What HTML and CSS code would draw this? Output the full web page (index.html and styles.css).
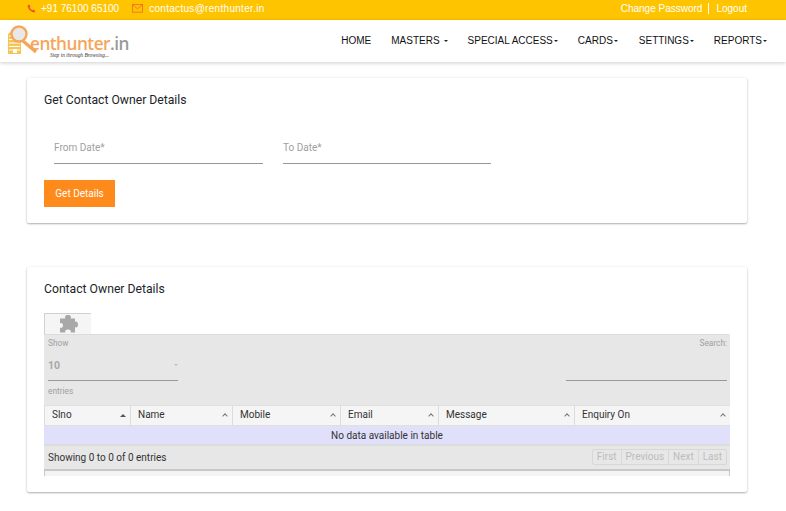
FILE: index.html
```html
<!DOCTYPE html>
<html lang="en">
<head>
    <meta charset="UTF-8">
    <meta name="viewport" content="width=device-width, initial-scale=1.0">
    <title>Contact Owner Details</title>
    <link rel="stylesheet" href="styles.css">
</head>
<body>

<div class="topbar">
    <div class="top-left">
        <svg class="top-icon" viewBox="0 0 12 12"><path d="M2.6 .6 L4.6 3.2 L3.6 4.6 C4.2 6 5.6 7.6 7.2 8.3 L8.6 7.3 L11.2 9.3 L9.9 11.2 C5.6 11.2 1 6.4 .8 2 Z" fill="#f4511e"/></svg>
        <span class="top-phone">+91 76100 65100</span>
        <svg class="top-icon mail" viewBox="0 0 12 10"><rect x=".5" y=".5" width="11" height="8.6" fill="none" stroke="#f4701e"/><path d="M.8 1 L6 5.4 L11.2 1" fill="none" stroke="#f4701e"/></svg>
        <span class="top-mail">contactus@renthunter.in</span>
    </div>
    <div class="top-right">
        <a class="top-link first">Change Password</a>
        <a class="top-link">Logout</a>
    </div>
</div>

<div class="navbar">
    <div class="logo">
        <svg class="logo-mark" viewBox="0 0 32 30">
            <path d="M0 29 V9 L7 3 L13 6 V29 Z" fill="#f6c455"/>
            <path d="M1 11 H12 M1 14.500 H12 M1 18 H12 M1 21.500 H12 M1 25 H12" stroke="#fff" stroke-width="1.200"/>
            <path d="M5 28 V24 H9 V28 Z" fill="#fff"/>
            <circle cx="11" cy="9" r="7.500" fill="#e8e8e8" stroke="#f5a65b" stroke-width="2.400"/>
            <path d="M15 16 L28 27" stroke="#f5a65b" stroke-width="3.200" fill="none"/>
        </svg>
        <div class="logo-text">
            <div class="logo-name">enthunter<span class="logo-in">.in</span></div>
            <div class="logo-tag">Step in through Browsing...</div>
        </div>
    </div>
    <ul class="menu">
        <li class="home">HOME</li>
        <li class="masters">MASTERS<span class="caret wide"></span></li>
        <li class="special">SPECIAL ACCESS<span class="caret"></span></li>
        <li class="cards">CARDS<span class="caret"></span></li>
        <li class="settings">SETTINGS<span class="caret"></span></li>
        <li>REPORTS<span class="caret"></span></li>
    </ul>
</div>

<div class="content">
    <div class="card first-card">
        <h4>Get Contact Owner Details</h4>
        <div class="date-row">
            <div class="date-field from">From Date*</div>
            <div class="date-field to">To Date*</div>
        </div>
        <button class="btn-details">Get Details</button>
    </div>

    <div class="card second-card">
        <h4>Contact Owner Details</h4>
        <div class="dt-tab">
            <svg class="puzzle" viewBox="0 0 20 20"><path d="M7.500 4.500 C6.500 3 7 1 10 1 C13 1 13.500 3 12.500 4.500 H17 V8 C18.500 7 20 8 20 10.500 C20 13 18.500 14 17 13 V18.500 H12.500 C13.500 17 12.500 15.500 10 15.500 C7.500 15.500 6.500 17 7.500 18.500 H2 V13.500 C3.500 14.500 5 13.500 5 11.500 C5 9.500 3.500 8.500 2 9.500 V4.500 Z" fill="#a8a8a8"/></svg>
        </div>
        <div class="dt-panel">
            <div class="dt-length">
                <div class="dt-small">Show</div>
                <div class="dt-select">10<span class="select-caret"></span></div>
                <div class="dt-small entries">entries</div>
            </div>
            <div class="dt-search">
                <div class="dt-small">Search:</div>
                <div class="search-line"></div>
            </div>
        </div>
        <table class="dt-table">
            <thead>
                <tr>
                    <th class="col-slno">Slno<span class="sort-up"></span></th>
                    <th class="col-name">Name<span class="sort"></span></th>
                    <th class="col-mobile">Mobile<span class="sort"></span></th>
                    <th class="col-email">Email<span class="sort"></span></th>
                    <th class="col-message">Message<span class="sort"></span></th>
                    <th class="col-enquiry">Enquiry On<span class="sort"></span></th>
                </tr>
            </thead>
            <tbody>
                <tr><td colspan="6">No data available in table</td></tr>
            </tbody>
        </table>
        <div class="dt-footer">
            <span>Showing 0 to 0 of 0 entries</span>
            <div class="pager">
                <span>First</span>
                <span>Previous</span>
                <span>Next</span>
                <span>Last</span>
            </div>
        </div>
        <div class="dt-scroll"></div>
    </div>
</div>

</body>
</html>
```

FILE: styles.css
```css
* {
    box-sizing: border-box;
}
html, body {
    height: 511px;
    overflow: hidden;
}
body {
    font-family: Roboto, Arial, sans-serif;
    background-color: #fff;
    margin: 0;
    padding: 0;
    color: #212529;
}

.topbar {
    height: 20px;
    background-color: #ffc400;
    color: #fff;
    font-family: "Liberation Sans", Arial, sans-serif;
    font-size: 10px;
    display: flex;
    justify-content: space-between;
    align-items: center;
    padding: 0 39px 3px 27px;
}
.top-left {
    display: flex;
    align-items: center;
}
.top-icon {
    width: 9px;
    height: 9px;
    margin-right: 5px;
}
.top-icon.mail {
    width: 11px;
    margin-right: 6px;
}
.top-phone {
    margin-right: 13px;
}
.top-mail {
    letter-spacing: 0.3px;
}
.top-right {
    display: flex;
    align-items: center;
}
.top-link {
    padding-left: 7px;
}
.top-link.first {
    padding: 0 6px 0 0;
    border-right: 1px solid #fff;
}

.navbar {
    height: 42px;
    background-color: #fff;
    box-shadow: 0 1px 4px rgba(0, 0, 0, 0.2);
    display: flex;
    justify-content: space-between;
    align-items: center;
    padding: 0 19px 1px 8px;
    position: relative;
}
.logo {
    display: flex;
    align-items: flex-start;
    height: 36px;
}
.logo-mark {
    width: 32px;
    height: 30px;
    margin-top: 2px;
}
.logo-text {
    margin-left: -10px;
    padding-top: 12px;
}
.logo-name {
    font-family: "Open Sans", Arial, sans-serif;
    font-size: 17.2px;
    font-weight: 600;
    line-height: 17px;
    letter-spacing: -0.5px;
    color: #f5a65b;
}
.logo-in {
    color: #9a9a9a;
}
.logo-tag {
    font-family: "Liberation Serif", serif;
    font-style: italic;
    font-size: 5.4px;
    color: #333;
    line-height: 7px;
    margin-left: 20px;
}
.menu {
    list-style: none;
    display: flex;
    margin: 0;
    padding: 0;
    font-family: "Liberation Sans", Arial, sans-serif;
    font-size: 10px;
    color: #111;
}
.menu li {
    white-space: nowrap;
}
.home {
    margin-right: 20px;
}
.masters {
    margin-right: 20px;
}
.special {
    margin-right: 20px;
}
.cards {
    margin-right: 21px;
}
.settings {
    margin-right: 20px;
}
.caret {
    display: inline-block;
    margin-left: 1px;
    vertical-align: 2px;
    border-top: 2px solid #222;
    border-left: 2px solid transparent;
    border-right: 2px solid transparent;
}
.caret.wide {
    margin-left: 4px;
}

.content {
    padding: 16px 39px 0 27px;
}
.card {
    background-color: #fff;
    border-radius: 2px;
    box-shadow: 0 1px 2px rgba(0, 0, 0, 0.3), 0 0 3px rgba(0, 0, 0, 0.06);
    padding: 15px 17px 0;
}
.first-card {
    height: 145px;
    margin-bottom: 44px;
}
.second-card {
    height: 225px;
}
h4 {
    margin: 0;
    font-size: 12.2px;
    font-weight: 400;
    line-height: 14px;
    color: #212529;
}

.date-row {
    display: flex;
    margin-top: 22px;
    padding-left: 10px;
}
.date-field {
    height: 35px;
    border-bottom: 1px solid #999;
    font-size: 10px;
    color: #a0a0a0;
    padding-top: 13px;
    line-height: 12px;
}
.date-field.from {
    width: 209px;
    margin-right: 20px;
}
.date-field.to {
    width: 208px;
}
.btn-details {
    display: block;
    margin-top: 16px;
    width: 71px;
    height: 27px;
    background-color: #ff8a1c;
    color: #fff;
    border: none;
    padding: 0;
    font-family: Roboto, Arial, sans-serif;
    font-size: 10px;
}

.dt-tab {
    width: 47px;
    height: 21px;
    margin-top: 17px;
    background-color: #f5f5f5;
    border: 1px solid #d0d0d0;
    border-width: 1px 0 0 1px;
    display: flex;
    align-items: center;
    justify-content: center;
}
.puzzle {
    width: 20px;
    height: 20px;
}
.dt-panel {
    height: 71px;
    background-color: #e7e7e7;
    display: flex;
    justify-content: space-between;
    padding: 4px 3px 0 4px;
    border-top: 1px solid #dcdcdc;
    border-radius: 0 2px 0 0;
}
.dt-small {
    font-size: 8.3px;
    line-height: 9px;
    color: #a0a0a0;
}
.dt-length {
    width: 130px;
}
.dt-select {
    height: 33px;
    border-bottom: 1px solid #999;
    font-size: 10.5px;
    font-weight: 700;
    color: #a8a8a8;
    padding-top: 12px;
    line-height: 12px;
    position: relative;
}
.select-caret {
    position: absolute;
    right: 0;
    top: 16px;
    border-top: 2px solid #bbb;
    border-left: 2px solid transparent;
    border-right: 2px solid transparent;
}
.entries {
    margin-top: 6px;
}
.dt-search {
    width: 161px;
    text-align: right;
}
.search-line {
    height: 33px;
    border-bottom: 1px solid #999;
}

.dt-table {
    width: 686px;
    border-collapse: separate;
    border-spacing: 0;
    table-layout: fixed;
    font-size: 10px;
}
.dt-table th {
    height: 21px;
    padding: 0 7px 3px;
    background-color: #f5f5f5;
    border-left: 1px solid #dcdcdc;
    border-top: 1px solid #e0e0e0;
    border-bottom: 1px solid #e0e0e0;
    font-weight: 400;
    text-align: left;
    color: #333;
    position: relative;
}
.col-slno { width: 86px; }
.col-name { width: 102px; }
.col-mobile { width: 108px; }
.col-email { width: 98px; }
.col-message { width: 136px; }
.col-enquiry { width: 156px; }
.sort {
    position: absolute;
    right: 5px;
    top: 8px;
    width: 4px;
    height: 4px;
    border-top: 1px solid #777;
    border-left: 1px solid #777;
    transform: rotate(45deg);
}
.sort-up {
    position: absolute;
    right: 4px;
    top: 8px;
    border-bottom: 3px solid #555;
    border-left: 3px solid transparent;
    border-right: 3px solid transparent;
}
.dt-table td {
    height: 18px;
    padding: 0;
    background-color: #e0e0fb;
    text-align: center;
    color: #333;
}
.dt-footer {
    height: 25px;
    background-color: #e7e7e7;
    border-top: 2px solid #dcdcdc;
    display: flex;
    justify-content: space-between;
    align-items: center;
    padding: 0 3px 0 4px;
    font-size: 10px;
    color: #333;
}
.pager {
    display: flex;
    border: 1px solid #d8d8d8;
    border-radius: 2px;
    color: #bcbcbc;
    margin-bottom: 2px;
}
.pager span {
    padding: 0 4px;
    height: 14px;
    line-height: 14px;
    border-left: 1px solid #d8d8d8;
}
.pager span:first-child {
    border-left: none;
}
.dt-scroll {
    height: 7px;
    background-color: #f4f4f4;
    border-style: solid;
    border-color: #c8c8c8;
    border-width: 2px 1px 0;
}
```
